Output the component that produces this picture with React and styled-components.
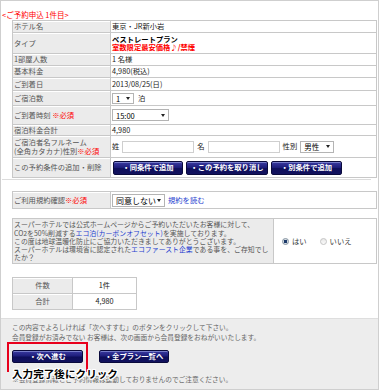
import React from 'react';
import styled, { createGlobalStyle } from 'styled-components';

const Global = createGlobalStyle`
  html, body { margin: 0; padding: 0; background: #fff; }
  body { font-family: "Noto Sans CJK JP", "Noto Sans", sans-serif; }
  * { box-sizing: border-box; }
`;

const Page = styled.div`
  width: 379px;
  height: 390px;
  border: 1px solid #cfcfcf;
  display: flex;
  flex-direction: column;
  font-size: 7.3px;
  color: #555;
  overflow: hidden;
`;

const Heading = styled.div`
  padding: 8px 0 0 1px;
  line-height: 11px;
  height: 19px;
  color: #f00;
  font-size: 7.5px;
  white-space: nowrap;
`;

const Section = styled.div`
  padding-left: 11px;
  margin-top: ${(p) => p.mt || 0}px;
`;

const Table = styled.div`
  width: ${(p) => p.w || 365}px;
  border: 1px solid #c8c8c8;
  border-bottom: none;
`;

const Row = styled.div`
  display: grid;
  grid-template-columns: ${(p) => p.cols || '98px 1fr'};
  height: ${(p) => p.h}px;
  border-bottom: 1px solid #c8c8c8;
`;

const Label = styled.div`
  background: #ebebeb;
  border-right: 1px solid #c8c8c8;
  box-shadow: inset 0 1px 0 #fff;
  display: flex;
  flex-direction: column;
  justify-content: center;
  align-items: ${(p) => (p.center ? 'center' : 'flex-start')};
  padding-left: ${(p) => (p.center ? 0 : 1)}px;
  color: #555;
  line-height: 9px;
  white-space: nowrap;
`;

const Value = styled.div`
  display: flex;
  align-items: center;
  justify-content: ${(p) => (p.center ? 'center' : 'flex-start')};
  gap: ${(p) => p.gap || 0}px;
  padding-left: ${(p) => (p.center ? 0 : p.pl ?? 1)}px;
  color: #1a1a1a;
  line-height: 9px;
  white-space: nowrap;
`;

const Stack = styled.div`
  display: flex;
  flex-direction: column;
  line-height: 8.5px;
`;

const PlanName = styled.span`
  color: #000;
  font-weight: 700;
`;

const PlanNote = styled.span`
  color: #f00;
  font-weight: 700;
`;

const Required = styled.span`
  color: #f00;
`;

const Select = styled.span`
  display: inline-flex;
  align-items: center;
  justify-content: space-between;
  width: ${(p) => p.w}px;
  height: ${(p) => p.h || 12}px;
  padding: 0 3px;
  border: 1px solid #b4b4b4;
  background: #fff;
  color: #000;
  font-size: ${(p) => p.fs || 7.5}px;
`;

const Arrow = styled.span`
  width: 0;
  height: 0;
  border-left: 2.5px solid transparent;
  border-right: 2.5px solid transparent;
  border-top: 3px solid #222;
`;

const TextInput = styled.input`
  width: 72px;
  height: 12px;
  border: 1px solid #cfcfcf;
  background: #fff;
  padding: 0;
  margin: 0;
`;

const NavButton = styled.button`
  width: ${(p) => p.w}px;
  height: ${(p) => p.h || 14}px;
  padding: 0;
  margin: 0;
  border: 1px solid #0a0a3c;
  border-radius: 2px;
  background: linear-gradient(#3a3aa0 0%, #1e1e7c 45%, #0e0e5a 55%, #12125e 100%);
  box-shadow: inset 0 1px 0 rgba(160, 170, 230, 0.6);
  color: #fff;
  font-family: inherit;
  font-size: 7.3px;
  font-weight: 700;
  line-height: 1;
  display: inline-flex;
  align-items: center;
  justify-content: center;
  white-space: nowrap;
`;

const Link = styled.span`
  color: #1f3fd0;
`;

const Divider = styled.div`
  height: 1px;
  margin: 1px 7px 0 1px;
  background: #dcdcdc;
`;

const NoticeCell = styled.div`
  background: #ebebeb;
  border-right: 1px solid #c8c8c8;
  display: flex;
  flex-direction: column;
  justify-content: center;
  padding-left: 1px;
  font-size: 6.9px;
  line-height: 8.3px;
  color: #555;
  white-space: nowrap;
`;

const RadioCell = styled.div`
  display: flex;
  align-items: center;
  padding-left: 8px;
  color: #333;
  font-size: 7.3px;
`;

const RadioOption = styled.span`
  display: inline-flex;
  align-items: center;
  gap: 3px;
  margin-right: 13px;
`;

const Radio = styled.span`
  display: inline-block;
  width: 7px;
  height: 7px;
  border-radius: 50%;
  border: 1px solid ${(p) => (p.checked ? '#8492a0' : '#c4c4c4')};
  background: ${(p) =>
    p.checked
      ? 'radial-gradient(circle, #1c3a6a 0 45%, #d6dde4 55%)'
      : 'linear-gradient(#e8e8e8, #fafafa)'};
`;

const Footer = styled.div`
  flex: 1;
  margin-top: 8px;
  background: #ededed;
  border-top: 1px solid #dedede;
  padding: 3px 0 0 11px;
  color: #666;
  font-size: 6.7px;
  line-height: 10px;
  white-space: nowrap;
`;

const ButtonRow = styled.div`
  display: flex;
  gap: 16px;
  margin-top: 8px;
`;

const Callout = styled.div`
  position: relative;
  display: flex;
`;

const RedFrame = styled.div`
  position: absolute;
  left: -5px;
  top: -8px;
  width: 81px;
  height: 30px;
  border: 2px solid #e8001c;
  border-bottom: none;
  pointer-events: none;
`;

const CalloutLabel = styled.div`
  position: absolute;
  left: 0;
  top: 17px;
  z-index: 2;
  font-size: 10.6px;
  line-height: 13px;
  font-weight: 700;
  color: #000;
  white-space: nowrap;
  text-shadow: 1px 0 0 #fff, -1px 0 0 #fff, 0 1px 0 #fff, 0 -1px 0 #fff,
    1px 1px 0 #fff, -1px -1px 0 #fff, 1px -1px 0 #fff, -1px 1px 0 #fff,
    0 0 3px #fff;
`;

const Notice = styled.div`
  margin-top: 11px;
`;

export default function App() {
  return (
    <>
      <Global />
      <Page>
        <Heading>&lt;ご予約申込 1件目&gt;</Heading>
        <Section>
          <Table>
            <Row h={12}>
              <Label>ホテル名</Label>
              <Value>東京・JR新小岩</Value>
            </Row>
            <Row h={21}>
              <Label>タイプ</Label>
              <Value>
                <Stack>
                  <PlanName>ベストレートプラン</PlanName>
                  <PlanNote>室数限定最安価格♪/禁煙</PlanNote>
                </Stack>
              </Value>
            </Row>
            <Row h={12}>
              <Label>1部屋人数</Label>
              <Value>1 名様</Value>
            </Row>
            <Row h={12}>
              <Label>基本料金</Label>
              <Value>4,980(税込)</Value>
            </Row>
            <Row h={13}>
              <Label>ご到着日</Label>
              <Value>2013/08/25(日)</Value>
            </Row>
            <Row h={15}>
              <Label>ご宿泊数</Label>
              <Value gap={4}>
                <Select w={22} h={11}>
                  1<Arrow />
                </Select>
                泊
              </Value>
            </Row>
            <Row h={19}>
              <Label>
                <span>
                  ご到着時刻 <Required>※必須</Required>
                </span>
              </Label>
              <Value>
                <Select w={57}>
                  15:00<Arrow />
                </Select>
              </Value>
            </Row>
            <Row h={11}>
              <Label>宿泊料金合計</Label>
              <Value>4,980</Value>
            </Row>
            <Row h={22}>
              <Label>
                <span>ご宿泊者名フルネーム</span>
                <span>
                  (全角カタカナ)性別<Required>※必須</Required>
                </span>
              </Label>
              <Value gap={3}>
                <span>姓</span>
                <TextInput type="text" />
                <span>名</span>
                <TextInput type="text" />
                <span>性別</span>
                <Select w={34}>
                  男性<Arrow />
                </Select>
              </Value>
            </Row>
            <Row h={20}>
              <Label>この予約条件の追加・削除</Label>
              <Value gap={3} pl={2}>
                <NavButton w={70}>・同条件で追加</NavButton>
                <NavButton w={82}>・この予約を取り消し</NavButton>
                <NavButton w={71}>・別条件で追加</NavButton>
              </Value>
            </Row>
          </Table>
        </Section>
        <Divider />
        <Section mt={11}>
          <Table>
            <Row h={17}>
              <Label>
                <span>
                  ご利用規約確認<Required>※必須</Required>
                </span>
              </Label>
              <Value gap={3}>
                <Select w={53} h={13} fs={8}>
                  同意しない<Arrow />
                </Select>
                <Link>規約を読む</Link>
              </Value>
            </Row>
          </Table>
        </Section>
        <Section mt={9}>
          <Table>
            <Row h={45} cols="261px 1fr">
              <NoticeCell>
                <span>スーパーホテルでは公式ホームページからご予約いただいたお客様に対して、</span>
                <span>
                  CO2を50%削減する<Link>エコ泊(カーボンオフセット)</Link>を実施しております。
                </span>
                <span>この度は地球温暖化防止にご協力いただきましてありがとうございます。</span>
                <span>
                  スーパーホテルは環境省に認定された<Link>エコファースト企業</Link>である事を、ご存知でし
                </span>
                <span>たか？</span>
              </NoticeCell>
              <RadioCell>
                <RadioOption>
                  <Radio checked />
                  はい
                </RadioOption>
                <RadioOption>
                  <Radio />
                  いいえ
                </RadioOption>
              </RadioCell>
            </Row>
          </Table>
        </Section>
        <Section mt={13}>
          <Table w={125}>
            <Row h={16} cols="60px 1fr">
              <Label center>件数</Label>
              <Value center>1件</Value>
            </Row>
            <Row h={16} cols="60px 1fr">
              <Label center>合計</Label>
              <Value center>4,980</Value>
            </Row>
          </Table>
        </Section>
        <Footer>
          <div>この内容でよろしければ「次へすすむ」のボタンをクリックして下さい。</div>
          <div>会員登録がお済みでない お客様は、次の画面から会員登録をおねがいいたします。</div>
          <ButtonRow>
            <Callout>
              <NavButton w={71} h={13}>・次へ進む</NavButton>
              <RedFrame />
              <CalloutLabel>入力完了後にクリック</CalloutLabel>
            </Callout>
            <NavButton w={70} h={13}>・全プラン一覧へ</NavButton>
          </ButtonRow>
          <Notice>※会員登録情報とご予約情報は連動しておりませんのでご注意ください。</Notice>
        </Footer>
      </Page>
    </>
  );
}
